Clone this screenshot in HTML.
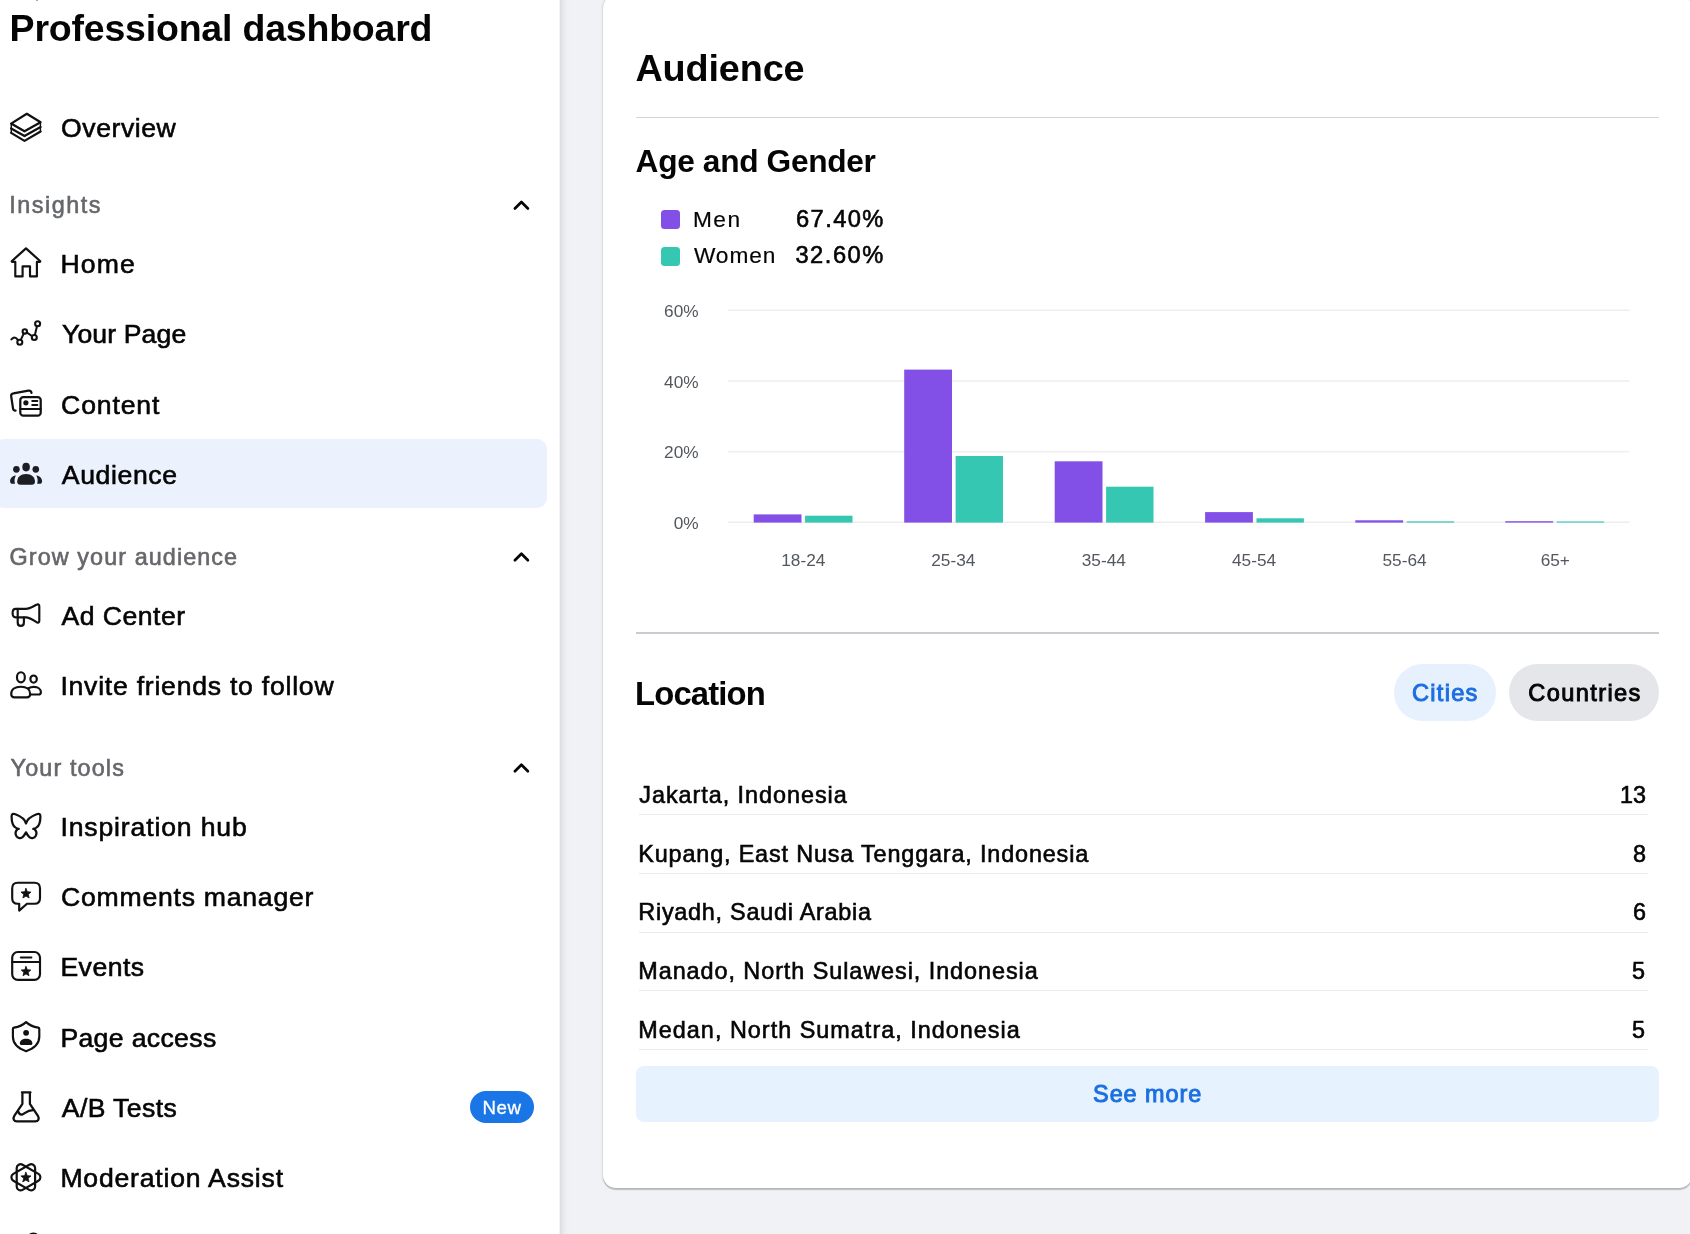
<!DOCTYPE html>
<html lang="en">
<head>
<meta charset="utf-8">
<title>Professional dashboard</title>
<style>
*{box-sizing:border-box;margin:0;padding:0}
html,body{width:1690px;height:1234px;overflow:hidden;background:#f1f2f6}
body{font-family:"Liberation Sans",Arial,sans-serif;color:#050505;position:relative}
.t{position:absolute;line-height:1;white-space:nowrap}
.m{-webkit-text-stroke:0.6px currentColor}
.l{-webkit-text-stroke:0.2px currentColor}
.b{font-weight:700}
.sb{-webkit-text-stroke:0.95px currentColor}
#side{position:absolute;left:0;top:0;width:560px;height:1234px;background:#fff}
#sideshadow{position:absolute;left:558.6px;top:0;width:12px;height:1234px;background:linear-gradient(90deg,#fff 0,#dedfe5 12%,#e3e4e9 25%,#ebecf0 45%,#f0f1f5 75%,#f1f2f6 100%)}
#sel{position:absolute;left:-6px;top:439px;width:553px;height:69px;border-radius:10px;background:#ebf1fd}
.sec{color:#65676b}
svg{position:absolute;overflow:visible}
#fg{position:absolute;left:0;top:0;width:1690px;height:1234px;will-change:transform}
#card{position:absolute;left:603px;top:-5px;width:1089px;height:1192.7px;background:#fff;border-radius:13px;box-shadow:0 1.3px 1.2px rgba(0,0,0,.2),0 0 2.5px rgba(0,0,0,.2)}
.hr{position:absolute;left:635.5px;width:1023.5px;height:1.3px;background:#d2d4d8}
.rowsep{position:absolute;left:639px;width:1008.6px;height:1.2px;background:#e9eaed}
.sw{position:absolute;left:661px;width:19px;height:19px;border-radius:3.5px}
.pill{position:absolute;top:664.3px;height:56.8px;border-radius:29px}
#more{position:absolute;left:635.8px;top:1066.2px;width:1023px;height:56.3px;border-radius:8px;background:#e6f2fe}
.blue{color:#1b6fe0}
#badge{position:absolute;left:470.2px;top:1091.2px;width:63.8px;height:31.4px;border-radius:16px;background:#1a75e7}
</style>
</head>
<body>

<div id="side"><div id="sel"></div><div id="badge"></div><div style="position:absolute;left:35.6px;top:-0.5px;width:2.6px;height:1.7px;background:#8a8a8a;border-radius:0 0 1px 1px"></div></div>
<div id="sideshadow"></div>
<div id="card"></div>
<div id="fg">
<div class="t b" style="left:9.60px;top:10.03px;font-size:37.5px;letter-spacing:-0.204px;">Professional dashboard</div>
<div class="t sec m" style="left:9.30px;top:194.03px;font-size:23.4px;letter-spacing:1.512px;">Insights</div>
<div class="t sec m" style="left:9.60px;top:546.03px;font-size:23.4px;letter-spacing:1.069px;">Grow your audience</div>
<div class="t sec m" style="left:10.60px;top:757.03px;font-size:23.4px;letter-spacing:1.125px;">Your tools</div>
<div class="t m" style="left:61.10px;top:115.03px;font-size:26.6px;letter-spacing:0.554px;">Overview</div>
<div class="t m" style="left:60.40px;top:251.03px;font-size:26.6px;letter-spacing:1.184px;">Home</div>
<div class="t m" style="left:62.00px;top:321.03px;font-size:26.6px;letter-spacing:0.120px;">Your Page</div>
<div class="t m" style="left:61.10px;top:392.03px;font-size:26.6px;letter-spacing:0.858px;">Content</div>
<div class="t m" style="left:61.80px;top:462.04px;font-size:26.6px;letter-spacing:0.628px;">Audience</div>
<div class="t m" style="left:61.50px;top:603.02px;font-size:26.6px;letter-spacing:0.477px;">Ad Center</div>
<div class="t m" style="left:60.40px;top:673.04px;font-size:26.6px;letter-spacing:0.760px;">Invite friends to follow</div>
<div class="t m" style="left:60.40px;top:814.04px;font-size:26.6px;letter-spacing:0.852px;">Inspiration hub</div>
<div class="t m" style="left:61.10px;top:884.02px;font-size:26.6px;letter-spacing:0.756px;">Comments manager</div>
<div class="t m" style="left:60.40px;top:954.03px;font-size:26.6px;letter-spacing:0.479px;">Events</div>
<div class="t m" style="left:60.40px;top:1025.03px;font-size:26.6px;letter-spacing:0.353px;">Page access</div>
<div class="t m" style="left:61.80px;top:1095.03px;font-size:26.6px;letter-spacing:0.384px;">A/B Tests</div>
<div class="t m" style="left:60.40px;top:1165.04px;font-size:26.6px;letter-spacing:0.796px;">Moderation Assist</div>
<div class="t" style="left:482.50px;top:1099.04px;font-size:18.7px;letter-spacing:0.606px;color:#fff;-webkit-text-stroke:0.3px #fff">New</div>
<svg style="left:0;top:0;width:560px;height:1234px" viewBox="0 0 560 1234" fill="none" stroke="#111" stroke-width="2.25" stroke-linecap="round" stroke-linejoin="round">
<path d="M514.9 208.5 L521.4 202.0 L527.9 208.5" stroke-width="2.7" stroke="#050505"/>
<path d="M514.9 560.2 L521.4 553.7 L527.9 560.2" stroke-width="2.7" stroke="#050505"/>
<path d="M514.9 771.2 L521.4 764.7 L527.9 771.2" stroke-width="2.7" stroke="#050505"/>
<path d="M26.8 113.8 L40.6 122.2 L24.5 131.3 L11.1 123.6 Z"/>
<path d="M11.1 128.4 L24.5 136.1 L40.6 127.0"/>
<path d="M11.1 132.9 L24.5 140.9 L40.6 131.5"/>
<path d="M11.3 124.2 V132.6 M40.4 122.8 V131.2" stroke-width="1.4"/>
<path d="M11.7 261.2 L26.0 248.4 L40.3 261.2" stroke-width="2.2"/>
<path d="M12.2 261.9 H15.3 V276.4 H22.6 V266.3 H30.0 V276.4 H36.9 V261.9 H39.8" stroke-width="2.15"/>
<path d="M11.4 339.4 C13.6 337.0 15.4 336.4 17.8 339.8" stroke-width="2.0"/>
<circle cx="19.8" cy="342.2" r="2.5" stroke-width="2.1"/>
<path d="M20.9 339.7 L23.6 333.8 M27.0 332.7 L31.9 336.0 M35.0 334.6 L36.9 326.6" stroke-width="2.0"/>
<circle cx="24.8" cy="331.4" r="2.2" stroke-width="2.1"/>
<circle cx="34.3" cy="337.5" r="2.5" stroke-width="2.1"/>
<circle cx="37.6" cy="323.8" r="2.5" stroke-width="2.1"/>
<rect x="20.3" y="397.1" width="20.4" height="18.6" rx="3"/>
<path d="M20.3 409.0 H40.7" stroke-width="2.1"/>
<circle cx="25.9" cy="402.8" r="2.6" fill="#111" stroke="none"/>
<path d="M32.2 401.0 H37.4 M32.2 405.0 H37.4" stroke-width="1.9"/>
<path d="M15.6 410.6 C13.6 410.8 13.2 409.6 13.0 408.4 L11.2 396.4 C10.9 394.6 11.8 393.6 13.4 393.4 L28.4 390.6 C30.4 390.3 31.2 391.4 31.5 392.8"/>
<g fill="#1c1e21" stroke="none">
<ellipse cx="26.1" cy="467.1" rx="3.8" ry="4.3"/><ellipse cx="16.4" cy="469.3" rx="3.3" ry="3.4"/><ellipse cx="35.8" cy="469.3" rx="3.3" ry="3.4"/>
<path d="M17.2 481.8 C17.2 477.2 20.6 474.0 26.1 474.0 C31.6 474.0 35.0 477.2 35.0 481.8 C35.0 483.8 33.8 484.8 31.8 484.8 H20.4 C18.4 484.8 17.2 483.8 17.2 481.8 Z"/>
<path d="M15.6 475.4 C12.2 476.0 10.1 478.4 10.1 481.2 C10.1 482.8 11.0 483.8 12.8 483.8 H15.0 C14.2 481.0 14.4 478.0 15.9 475.6 Z"/>
<path d="M36.6 475.4 C40.0 476.0 42.1 478.4 42.1 481.2 C42.1 482.8 41.2 483.8 39.4 483.8 H37.2 C38.0 481.0 37.8 478.0 36.3 475.6 Z"/>
</g>
<path d="M17.7 608.9 H15.6 C13.6 608.9 12.6 610.4 12.6 613.1 C12.6 615.9 13.6 617.4 15.6 617.4 H26.0 C29.5 617.4 31.5 619.0 36.4 622.2 C38.0 623.2 39.3 622.6 39.3 620.8 V606.2 C39.3 604.4 38.0 603.8 36.4 604.8 C31.5 607.4 29.5 608.9 26.0 608.9 H17.7" stroke-width="2.15"/>
<path d="M17.7 608.9 V622.4 C17.7 624.8 18.8 625.9 20.8 625.9 C22.8 625.9 23.9 624.8 23.9 622.4 V617.6" stroke-width="2.15"/>
<ellipse cx="20.9" cy="677.3" rx="3.95" ry="5.1" stroke-width="2.15"/>
<ellipse cx="33.6" cy="679.1" rx="3.25" ry="3.6" stroke-width="2.15"/>
<path d="M11.2 694.0 C11.2 689.6 15.0 686.7 20.8 686.7 C26.6 686.7 30.2 689.6 30.2 694.0 C30.2 696.4 29.0 697.4 26.8 697.4 H14.6 C12.4 697.4 11.2 696.4 11.2 694.0 Z" stroke-width="2.15"/>
<path d="M28.4 688.3 C30.0 687.4 31.8 686.9 33.8 686.9 C38.4 686.9 40.9 689.4 40.9 692.2 C40.9 693.8 40.0 694.5 38.4 694.5 H31.0" stroke-width="2.15"/>
<path d="M26 823.4 C25.2 819.8 21.6 816.6 15.4 814.2 C13.0 813.4 11.6 814.0 11.6 816.4 C11.6 820.0 12.2 825.6 15.6 827.6 C16.6 828.2 17.6 828.6 18.8 828.8 M17.6 829.2 C15.8 830.8 15.0 833.4 16.2 835.8 C17.6 838.4 21.0 839.0 23.0 836.8 C24.4 835.2 25.2 833.8 26 832.4 M 26.00 823.4 C 26.80 819.8 30.40 816.6 36.60 814.2 C 39.00 813.4 40.40 814.0 40.40 816.4 C 40.40 820.0 39.80 825.6 36.40 827.6 C 35.40 828.2 34.40 828.6 33.20 828.8 M 34.40 829.2 C 36.20 830.8 37.00 833.4 35.80 835.8 C 34.40 838.4 31.00 839.0 29.00 836.8 C 27.60 835.2 26.80 833.8 26.00 832.4"/>
<path d="M17.7 882.7 H34.5 C38.2 882.7 40.0 884.5 40.0 888.2 V898.2 C40.0 901.9 38.2 903.7 34.5 903.7 H27.0 L19.2 910.6 V903.7 H17.7 C14.0 903.7 12.2 901.9 12.2 898.2 V888.2 C12.2 884.5 14.0 882.7 17.7 882.7 Z" stroke-width="2.15"/>
<polygon points="26.00,888.40 27.40,891.77 31.04,892.06 28.27,894.44 29.12,897.99 26.00,896.09 22.88,897.99 23.73,894.44 20.96,892.06 24.60,891.77" fill="#111" stroke="#111" stroke-width="0.8"/>
<rect x="12.2" y="952.0" width="27.8" height="27.8" rx="5.6" stroke-width="2.15"/>
<path d="M12.2 962.0 H40.0" stroke-width="2.1"/>
<path d="M20.8 957.6 H31.4" stroke-width="2.0"/>
<polygon points="26.00,966.50 27.35,969.74 30.85,970.02 28.18,972.31 29.00,975.73 26.00,973.89 23.00,975.73 23.82,972.31 21.15,970.02 24.65,969.74" fill="#111" stroke="#111" stroke-width="0.8"/>
<path d="M26.1 1022.1 C23.0 1025.0 18.6 1026.8 14.0 1027.6 C13.2 1027.8 12.9 1028.2 12.9 1029.0 V1036.6 C12.9 1043.6 17.8 1048.4 26.1 1051.2 C34.4 1048.4 39.3 1043.6 39.3 1036.6 V1029.0 C39.3 1028.2 39.0 1027.8 38.2 1027.6 C33.6 1026.8 29.2 1025.0 26.1 1022.1 Z" stroke-width="2.15"/>
<circle cx="26.1" cy="1032.8" r="2.9" fill="#111" stroke="none"/>
<path d="M19.8 1043.6 C19.8 1040.4 22.4 1038.7 26.1 1038.7 C29.8 1038.7 32.4 1040.4 32.4 1043.6 C32.4 1044.5 32.0 1044.9 31.2 1044.9 H21.0 C20.2 1044.9 19.8 1044.5 19.8 1043.6 Z" fill="#111" stroke="none"/>
<path d="M21.9 1092.3 H30.5 M22.4 1092.3 V1103.8 L14.3 1115.8 C12.5 1118.6 13.9 1121.4 17.0 1121.4 H35.2 C38.3 1121.4 39.7 1118.6 37.9 1115.8 L29.9 1103.8 V1092.3"/>
<path d="M18.3 1111.6 C19.0 1114.0 20.6 1114.9 22.6 1114.4 C25.2 1113.7 26.6 1110.2 33.0 1110.2" stroke-width="2.2"/>
<path d="M38.45 1173.92 A3.9 3.9 0 0 1 38.45 1180.68 L22.55 1189.86 A3.9 3.9 0 0 1 16.70 1186.48 L16.70 1168.12 A3.9 3.9 0 0 1 22.55 1164.74 Z" stroke-width="2.2"/>
<path d="M13.35 1180.68 A3.9 3.9 0 0 1 13.35 1173.92 L29.25 1164.74 A3.9 3.9 0 0 1 35.10 1168.12 L35.10 1186.48 A3.9 3.9 0 0 1 29.25 1189.86 Z" stroke-width="2.2"/>
<polygon points="25.90,1172.30 27.30,1175.67 30.94,1175.96 28.17,1178.34 29.02,1181.89 25.90,1179.98 22.78,1181.89 23.63,1178.34 20.86,1175.96 24.50,1175.67" fill="#111" stroke="#111" stroke-width="0.8"/>
<circle cx="33.4" cy="1239.6" r="6" stroke-width="2.2"/>
</svg>
<div class="t b" style="left:635.40px;top:50.03px;font-size:37.8px;letter-spacing:-0.129px;">Audience</div>
<div class="hr" style="top:116.9px"></div>
<div class="t b" style="left:635.60px;top:146.04px;font-size:31.7px;letter-spacing:-0.347px;">Age and Gender</div>
<div class="sw" style="top:210.2px;background:#8250e6"></div>
<div class="sw" style="top:246.6px;background:#35c7b2"></div>
<div class="t l" style="left:692.90px;top:208.03px;font-size:22.7px;letter-spacing:1.492px;">Men</div>
<div class="t l" style="left:693.90px;top:244.03px;font-size:22.7px;letter-spacing:0.941px;">Women</div>
<div class="t m" style="left:796.00px;top:208.03px;font-size:23.7px;letter-spacing:1.405px;">67.40%</div>
<div class="t m" style="left:795.40px;top:244.04px;font-size:23.7px;letter-spacing:1.525px;">32.60%</div>
<svg style="left:0;top:0;width:1690px;height:620px" viewBox="0 0 1690 620" font-family="Liberation Sans, Arial, sans-serif" font-size="17.25" fill="#53575e">
<rect x="728" y="309.5" width="901.5" height="1.5" fill="#eeeef0"/>
<rect x="728" y="380.2" width="901.5" height="1.5" fill="#eeeef0"/>
<rect x="728" y="450.9" width="901.5" height="1.5" fill="#eeeef0"/>
<rect x="728" y="521.5" width="901.5" height="1.5" fill="#eeeef0"/>
<text x="698.6" y="316.9" text-anchor="end">60%</text>
<text x="698.6" y="387.6" text-anchor="end">40%</text>
<text x="698.6" y="458.3" text-anchor="end">20%</text>
<text x="698.6" y="529.0" text-anchor="end">0%</text>
<rect x="753.7" y="514.4" width="47.8" height="8.2" fill="#8250e6"/>
<rect x="805.1" y="515.7" width="47.4" height="6.9" fill="#35c7b2"/>
<text x="803.3" y="565.7" text-anchor="middle">18-24</text>
<rect x="904.2" y="369.6" width="47.8" height="153.0" fill="#8250e6"/>
<rect x="955.6" y="456.0" width="47.4" height="66.6" fill="#35c7b2"/>
<text x="953.3" y="565.7" text-anchor="middle">25-34</text>
<rect x="1054.7" y="461.3" width="47.8" height="61.3" fill="#8250e6"/>
<rect x="1106.1" y="486.7" width="47.4" height="35.9" fill="#35c7b2"/>
<text x="1103.8" y="565.7" text-anchor="middle">35-44</text>
<rect x="1205.1" y="512.1" width="47.8" height="10.5" fill="#8250e6"/>
<rect x="1256.5" y="518.3" width="47.4" height="4.3" fill="#35c7b2"/>
<text x="1254.1" y="565.7" text-anchor="middle">45-54</text>
<rect x="1355.3" y="520.3" width="47.8" height="2.3" fill="#8250e6"/>
<rect x="1406.7" y="521.4" width="47.4" height="1.2" fill="#35c7b2"/>
<text x="1404.6" y="565.7" text-anchor="middle">55-64</text>
<rect x="1505.3" y="521.2" width="47.8" height="1.4" fill="#8250e6"/>
<rect x="1556.7" y="521.5" width="47.4" height="1.1" fill="#35c7b2"/>
<text x="1555.3" y="565.7" text-anchor="middle">65+</text>
</svg>
<div class="hr" style="top:632px;height:1.6px;background:#c9ccd1"></div>
<div class="t b" style="left:635.00px;top:678.03px;font-size:32.8px;letter-spacing:-0.831px;">Location</div>
<div class="pill" style="left:1393.5px;width:102.5px;background:#e7f1fe"></div>
<div class="pill" style="left:1509.4px;width:149.4px;background:#e4e6ea"></div>
<div class="t sb blue" style="left:1412.10px;top:682.03px;font-size:23.6px;letter-spacing:1.240px;">Cities</div>
<div class="t sb" style="left:1528.30px;top:682.03px;font-size:23.6px;letter-spacing:1.378px;">Countries</div>
<div class="t m" style="left:639.30px;top:784.02px;font-size:23.4px;letter-spacing:0.957px;">Jakarta, Indonesia</div>
<div class="t m" style="left:1619.89px;top:784.02px;font-size:23.4px;">13</div>
<div class="rowsep" style="top:814.3px"></div>
<div class="t m" style="left:638.30px;top:843.03px;font-size:23.4px;letter-spacing:0.841px;">Kupang, East Nusa Tenggara, Indonesia</div>
<div class="t m" style="left:1632.90px;top:843.03px;font-size:23.4px;">8</div>
<div class="rowsep" style="top:872.9px"></div>
<div class="t m" style="left:638.30px;top:901.03px;font-size:23.4px;letter-spacing:0.751px;">Riyadh, Saudi Arabia</div>
<div class="t m" style="left:1632.90px;top:901.03px;font-size:23.4px;">6</div>
<div class="rowsep" style="top:931.6px"></div>
<div class="t m" style="left:638.30px;top:960.03px;font-size:23.4px;letter-spacing:0.942px;">Manado, North Sulawesi, Indonesia</div>
<div class="t m" style="left:1631.90px;top:960.03px;font-size:23.4px;">5</div>
<div class="rowsep" style="top:990.2px"></div>
<div class="t m" style="left:638.30px;top:1019.02px;font-size:23.4px;letter-spacing:1.015px;">Medan, North Sumatra, Indonesia</div>
<div class="t m" style="left:1631.90px;top:1019.02px;font-size:23.4px;">5</div>
<div class="rowsep" style="top:1048.8px"></div>
<div id="more"></div>
<div class="t sb blue" style="left:1093.10px;top:1083.03px;font-size:23.4px;letter-spacing:0.957px;">See more</div>
</div>
</body>
</html>
